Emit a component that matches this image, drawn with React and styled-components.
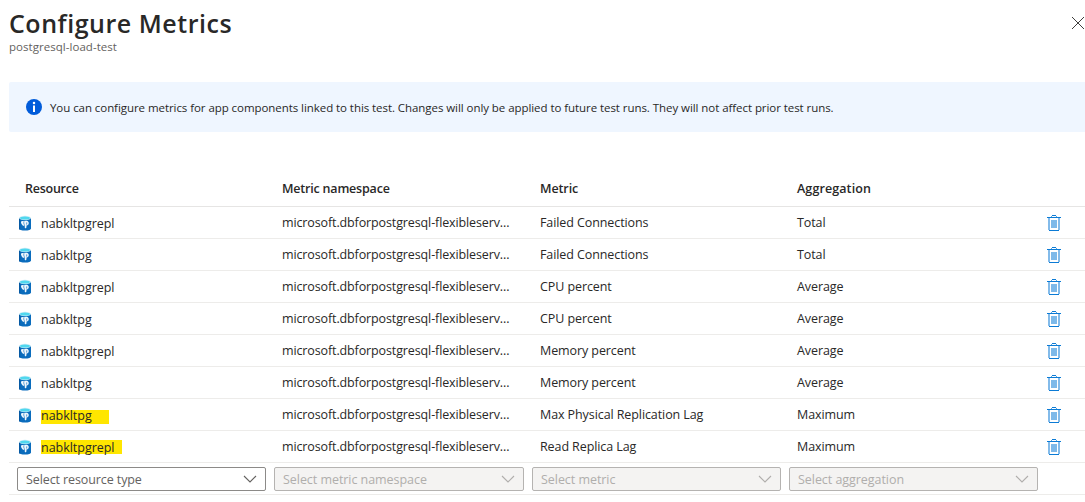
import React from "react";
import styled, { createGlobalStyle, css } from "styled-components";

const GlobalStyle = createGlobalStyle`
  * { box-sizing: border-box; }
  html, body { margin: 0; background: #fff; overflow: hidden; }
  body {
    font-family: "Segoe UI", "Open Sans", "Noto Sans", sans-serif;
    font-size: 12.5px;
    color: #292827;
  }
`;

const Blade = styled.main`
  width: 1085px;
  height: 502px;
  padding-left: 9px;
  overflow: hidden;
`;

const Header = styled.header`
  display: flex;
  justify-content: space-between;
  height: 82px;
  padding-top: 7px;
`;

const Title = styled.h1`
  margin: 0;
  font-size: 25px;
  line-height: 32px;
  font-weight: 600;
  letter-spacing: 0.53px;
  white-space: nowrap;
`;

const Subtitle = styled.div`
  font-size: 11.5px;
  line-height: 16px;
  letter-spacing: 0.04px;
  color: #646260;
`;

const CloseButton = styled.button`
  width: 14px;
  height: 14px;
  margin-top: 9px;
  padding: 0;
  border: 0;
  background: none;
  svg { display: block; }
`;

const Banner = styled.section`
  display: flex;
  align-items: center;
  gap: 8px;
  height: 50px;
  padding-left: 17px;
  border-radius: 2px 0 0 2px;
  background: #eff6ff;
  font-size: 11.5px;
  letter-spacing: -0.062px;
  white-space: nowrap;
`;

const Table = styled.div`
  margin-top: 38px;
`;

const columns = css`
  display: grid;
  grid-template-columns: 257px 258px 257px 257px 1fr;
  align-items: center;
  padding-left: 8px;
`;

const HeadRow = styled.div`
  ${columns}
  height: 37px;
  padding-top: 2px;
  border-bottom: 1px solid #e6e5e4;
  font-weight: 600;
`;

const Row = styled.div`
  ${columns}
  height: 32px;
  border-bottom: 1px solid #edecea;
`;

const Cell = styled.div`
  padding-left: 8px;
  line-height: 18px;
  white-space: nowrap;
  letter-spacing: ${(p) => p.$spacing || "-0.09px"};
`;

const Resource = styled.div`
  display: flex;
  align-items: center;
  gap: 9px;
  padding: 3px 0 0 1px;
  line-height: 18px;
  letter-spacing: -0.03px;
  svg { flex: none; margin-bottom: 2px; }
`;

const Name = styled.span`
  ${(p) =>
    p.$mark &&
    css`
      width: ${p.$mark.width}px;
      background: linear-gradient(#ffe600, #ffe600) 0 ${p.$mark.top}px / 100% 14px no-repeat;
    `}
`;

const DeleteButton = styled.button`
  width: 14px;
  height: 17px;
  margin-left: 1px;
  padding: 0;
  border: 0;
  background: none;
  svg { display: block; }
`;

const Select = styled.div`
  display: flex;
  align-items: center;
  justify-content: space-between;
  height: 24px;
  margin: 1px 8px 0 0;
  padding: 0 8px;
  border: 1px solid ${(p) => (p.$disabled ? "#b5b3b1" : "#8c8a88")};
  border-radius: 2px;
  background: ${(p) => (p.$disabled ? "#f4f3f2" : "#fff")};
  color: ${(p) => (p.$disabled ? "#b0aeac" : "#646260")};
  letter-spacing: ${(p) => (p.$disabled ? "-0.05px" : "-0.1px")};
  white-space: nowrap;
`;

const CloseIcon = () => (
  <svg width="14" height="14" viewBox="0 0 14 14">
    <path d="M1 1 13 13M13 1 1 13" stroke="#3f3e3d" strokeWidth="1" />
  </svg>
);

const InfoIcon = () => (
  <svg width="16" height="16" viewBox="0 0 16 16">
    <circle cx="8" cy="8" r="8" fill="#015cda" />
    <circle cx="8" cy="4" r="1.25" fill="#fff" />
    <rect x="7" y="6.5" width="2" height="6.5" fill="#fff" />
  </svg>
);

const PostgresIcon = () => (
  <svg width="14" height="16" viewBox="0 0 14 16">
    <path d="M1 3v10.4C1 14.6 3.7 15.5 7 15.5s6-.9 6-2.1V3z" fill="#0a6cbd" />
    <path d="M1 3v10.4c0 .7.5 1.100 1.200 1.400V4z" fill="#0559a3" />
    <ellipse cx="7" cy="3" rx="6" ry="2.2" fill="#c9ecf6" />
    <ellipse cx="7" cy="2.9" rx="4.9" ry="1.5" fill="#50d8ef" />
    <path
      d="M3 6.600c.7-.9 2-.9 2.900-.3 1-.7 3-.9 4-.1 1 .7 1.100 2.300.5 3.200-.5.7-1.200 1-1.900 1l-.1 2.200c-.1.900-1.500 1-1.600.1L6.700 10.100 5.200 11C4 10.200 2.700 8 3 6.600z"
      fill="#f0f7fc"
    />
    <path d="M5.900 6.500c-.3 1.200-.2 2.200.5 3.300M8.700 7.400v2.200" fill="none" stroke="#2f83c8" strokeWidth=".8" />
  </svg>
);

const TrashIcon = () => (
  <svg width="14" height="17" viewBox="0 0 14 17" shapeRendering="crispEdges">
    <path d="M1 4h2v12H1zM11 4h2v12h-2zM3 15h8v1H3z" fill="#83bbea" />
    <path d="M3 4h8v12H3z" fill="#fff" />
    <path d="M4 6h6v8H4z" fill="#7db9e9" />
    <path d="M4 2h1v1H4zM9 2h1v1H9z" fill="#5ca8e4" />
    <path d="M0 3h14v1H0zM2 16h10v1H2zM5 1h4v1H5z" fill="#0c7bd5" />
  </svg>
);

const ChevronIcon = () => (
  <svg width="14" height="8" viewBox="0 0 14 8">
    <path d="M1 1l6 6 6-6" fill="none" stroke="currentColor" strokeWidth="1.1" />
  </svg>
);

const rows = [
  ["nabkltpgrepl", "Failed Connections", "Total"],
  ["nabkltpg", "Failed Connections", "Total"],
  ["nabkltpgrepl", "CPU percent", "Average"],
  ["nabkltpg", "CPU percent", "Average"],
  ["nabkltpgrepl", "Memory percent", "Average"],
  ["nabkltpg", "Memory percent", "Average"],
  ["nabkltpg", "Max Physical Replication Lag", "Maximum", { width: 68, top: 3 }],
  ["nabkltpgrepl", "Read Replica Lag", "Maximum", { width: 81, top: 1 }],
];

const selects = ["Select resource type", "Select metric namespace", "Select metric", "Select aggregation"];

export default function App() {
  return (
    <>
      <GlobalStyle />
      <Blade>
        <Header>
          <div>
            <Title>Configure Metrics</Title>
            <Subtitle>postgresql-load-test</Subtitle>
          </div>
          <CloseButton aria-label="Close"><CloseIcon /></CloseButton>
        </Header>
        <Banner>
          <InfoIcon />
          <span>
            You can configure metrics for app components linked to this test. Changes will only be applied to
            future test runs. They will not affect prior test runs.
          </span>
        </Banner>
        <Table>
          <HeadRow>
            <Cell $spacing="-0.25px">Resource</Cell>
            <Cell $spacing="-0.2px">Metric namespace</Cell>
            <Cell $spacing="-0.1px">Metric</Cell>
            <Cell $spacing="0.1px">Aggregation</Cell>
          </HeadRow>
          {rows.map(([name, metric, aggregation, mark], i) => (
            <Row key={i}>
              <Resource>
                <PostgresIcon />
                <Name $mark={mark}>{name}</Name>
              </Resource>
              <Cell $spacing="-0.12px">microsoft.dbforpostgresql-flexibleserv...</Cell>
              <Cell>{metric}</Cell>
              <Cell>{aggregation}</Cell>
              <DeleteButton aria-label="Delete"><TrashIcon /></DeleteButton>
            </Row>
          ))}
          <Row>
            {selects.map((label, i) => (
              <Select key={label} $disabled={i > 0}>
                {label}
                <ChevronIcon />
              </Select>
            ))}
          </Row>
        </Table>
      </Blade>
    </>
  );
}
